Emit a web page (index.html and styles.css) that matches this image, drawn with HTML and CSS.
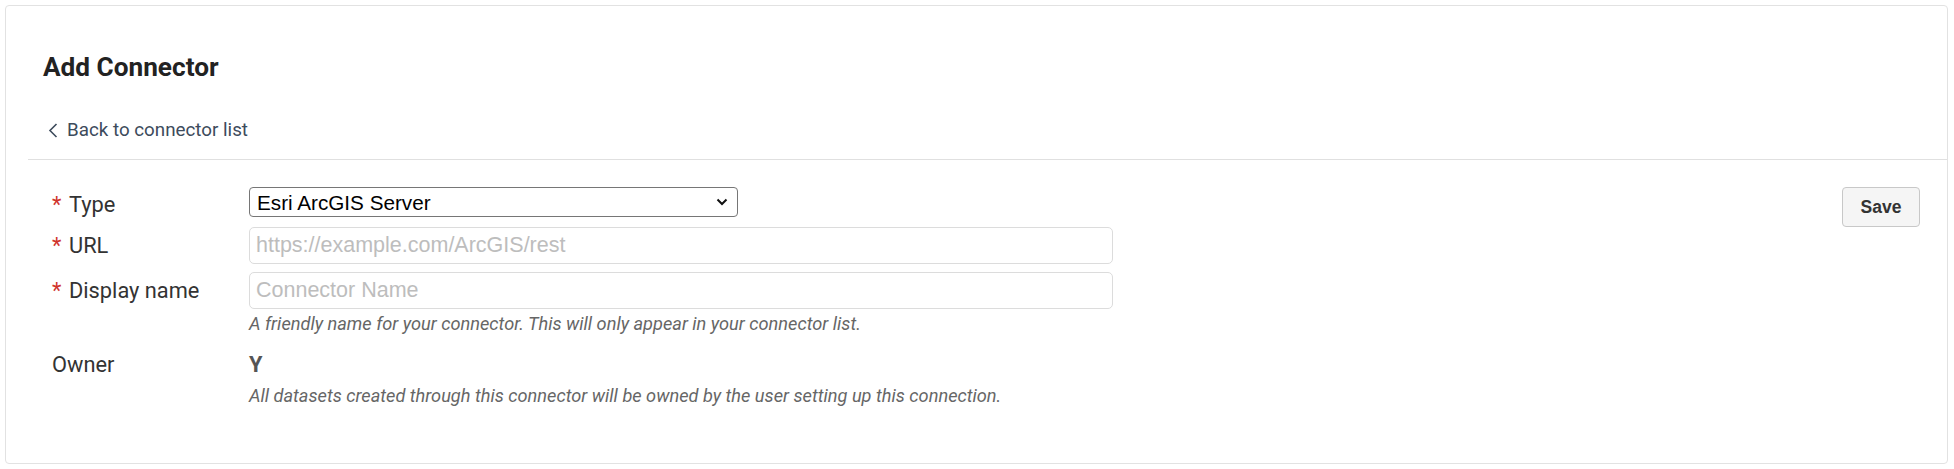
FILE: index.html
```html
<!DOCTYPE html>
<html lang="en">
<head>
<meta charset="utf-8">
<title>Add Connector</title>
<link rel="stylesheet" href="styles.css">
</head>
<body>
<div class="page">
  <div class="card">
    <div class="header">
      <h1 class="title">Add Connector</h1>
      <a class="back" href="#">
        <svg class="back-icon" width="10" height="15" viewBox="0 0 10 15" aria-hidden="true"><path d="M8.5 1 L2 7.5 L8.5 14" fill="none" stroke="#3d4b5c" stroke-width="1.6"/></svg>
        <span>Back to connector list</span>
      </a>
    </div>
    <div class="divider"></div>
    <div class="body">
      <div class="form">
        <div class="row row-type">
          <label class="label label-type"><span class="req">*</span>Type</label>
          <div class="select-wrap">
            <select class="select"><option>Esri ArcGIS Server</option></select>
            <svg class="select-arrow" width="12" height="8" viewBox="0 0 12 8" aria-hidden="true"><path d="M1.5 1.5 L6 6 L10.5 1.5" fill="none" stroke="#111" stroke-width="2"/></svg>
          </div>
        </div>
        <div class="row row-url">
          <label class="label"><span class="req">*</span>URL</label>
          <input class="input" type="text" placeholder="https://example.com/ArcGIS/rest">
        </div>
        <div class="row row-name">
          <label class="label"><span class="req">*</span>Display name</label>
          <input class="input" type="text" placeholder="Connector Name">
        </div>
        <p class="help help-name">A friendly name for your connector. This will only appear in your connector list.</p>
        <div class="row row-owner">
          <span class="label label-plain">Owner</span>
          <span class="owner-value">Y</span>
        </div>
        <p class="help help-owner">All datasets created through this connector will be owned by the user setting up this connection.</p>
      </div>
      <button class="save" type="button">Save</button>
    </div>
  </div>
</div>
</body>
</html>
```
FILE: styles.css
```css
* { box-sizing: border-box; }
html, body { margin: 0; padding: 0; background: #fff; }
body { font-family: Roboto, "Liberation Sans", Arial, sans-serif; color: #333; }

.page { padding: 5px 6px 6px 5px; }

.card {
  border: 1px solid #e2e2e2;
  border-radius: 4px;
  height: 459px;
  background: #fff;
}

.header { padding: 46px 0 0 37px; }

.title {
  margin: 0;
  font-size: 26.2px;
  line-height: 30px;
  font-weight: 700;
  color: #222;
}

.back {
  display: flex;
  align-items: center;
  margin-top: 37px;
  padding-left: 5px;
  height: 22px;
  font-size: 18.8px;
  line-height: 22px;
  color: #3d4b5c;
  text-decoration: none;
}
.back-icon { margin-right: 9px; flex: none; }

.divider {
  margin: 18px 0 0 22px;
  height: 1px;
  background: #e0e0e0;
}

.body {
  display: flex;
  justify-content: space-between;
  align-items: flex-start;
  padding: 27px 27px 0 46px;
}

.form { display: flex; flex-direction: column; }

.row { display: flex; align-items: center; }
.row-type { height: 30px; }
.row-url { margin-top: 10px; }
.row-name { margin-top: 8px; }
.row-owner { margin-top: 18px; align-items: baseline; }

.label {
  width: 197px;
  flex: none;
  font-size: 21.8px;
  line-height: 26px;
  color: #333;
}
.label-type { height: 30px; padding-top: 5px; }
.req {
  display: inline-block;
  width: 17px;
  color: #d0342c;
}

.select-wrap { position: relative; width: 489px; height: 30px; }
.select {
  appearance: none;
  -webkit-appearance: none;
  width: 100%;
  height: 30px;
  margin: 0;
  padding: 0 30px 0 7px;
  border: 1px solid #767676;
  border-radius: 4px;
  background: #fff;
  font-family: "Liberation Sans", Arial, sans-serif;
  font-size: 20.7px;
  color: #000;
}
.select-arrow { position: absolute; right: 10px; top: 11px; pointer-events: none; }

.input {
  width: 864px;
  height: 37px;
  margin: 0;
  padding: 0 6px;
  border: 1px solid #dcdcdc;
  border-radius: 5px;
  background: #fff;
  font-family: "Liberation Sans", Arial, sans-serif;
  font-size: 21.5px;
  color: #000;
}
.input::placeholder { color: #bdbdbd; }

.help {
  margin: 4px 0 0 197px;
  font-size: 18.2px;
  line-height: 21px;
  font-style: italic;
  color: #666;
}
.help-owner { margin-top: 7px; }

.owner-value {
  font-size: 21.8px;
  line-height: 26px;
  font-weight: 700;
  color: #555;
}

.save {
  width: 78px;
  height: 40px;
  margin: 0;
  padding: 0;
  border: 1px solid #c8c8c8;
  border-radius: 4px;
  background: #f5f5f5;
  font-family: "Liberation Sans", Arial, sans-serif;
  font-size: 17.5px;
  font-weight: 700;
  color: #333;
}
```
